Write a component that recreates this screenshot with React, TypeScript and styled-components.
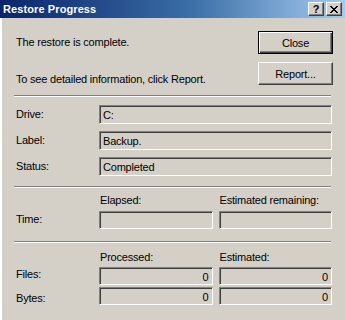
import React from "react";
import styled, { createGlobalStyle } from "styled-components";

const Global = createGlobalStyle`
  html, body { margin: 0; padding: 0; background: #d4d0c8; }
  body { font-family: "Liberation Sans", Arial, sans-serif; font-size: 11px; color: #000; }
`;

const Window = styled.div`
  width: 345px;
  height: 320px;
  overflow: hidden;
  background: #d4d0c8;
  box-shadow: inset 2px 0 0 #fff, inset 1px 0 0 #d4d0c8;
  display: flex;
  flex-direction: column;
`;

const TitleBar = styled.div`
  height: 18px;
  display: flex;
  align-items: center;
  padding: 0 3px 0 3px;
  background: linear-gradient(to right, #0a246a 0%, #3a6ea5 55%, #a6caf0 100%);
`;

const TitleText = styled.div`
  flex: 1;
  color: #fff;
  font-weight: bold;
  font-size: 11px;
  letter-spacing: 0.1px;
`;

const TitleButtons = styled.div`
  display: flex;
  gap: 2px;
`;

const CaptionButton = styled.div`
  width: 16px;
  height: 14px;
  box-sizing: border-box;
  background: #d4d0c8;
  border: 1px solid;
  border-color: #fff #404040 #404040 #fff;
  box-shadow: inset -1px -1px 0 #808080;
  display: flex;
  align-items: center;
  justify-content: center;
  font-weight: bold;
  font-size: 11px;
  line-height: 11px;
`;

const Text = styled.div`
  font-size: 11px;
  line-height: 13px;
  letter-spacing: -0.2px;
  white-space: nowrap;
`;

const Top = styled.div`
  display: grid;
  grid-template-columns: 1fr 75px;
  grid-template-rows: 23px 23px;
  row-gap: 8px;
  padding: 13px 12px 0 16px;
`;

const TopText = styled(Text)<{ $end?: boolean }>`
  align-self: ${(p) => (p.$end ? "end" : "center")};
  padding-bottom: ${(p) => (p.$end ? "0" : "1px")};
  margin-bottom: ${(p) => (p.$end ? "-1px" : "0")};
`;

const Button = styled.div<{ $default?: boolean }>`
  box-sizing: border-box;
  height: 23px;
  display: flex;
  align-items: center;
  justify-content: center;
  background: #d4d0c8;
  font-size: 11px;
  letter-spacing: -0.2px;
  ${(p) =>
    p.$default
      ? `border: 1px solid #000;
         box-shadow: inset 1px 1px 0 #fff, inset -1px -1px 0 #404040, inset -2px -2px 0 #808080;`
      : `border: 1px solid; border-color: #fff #404040 #404040 #fff;
         box-shadow: inset -1px -1px 0 #808080;`}
`;

const Separator = styled.div<{ $top: number }>`
  height: 0;
  border-top: 1px solid #808080;
  border-bottom: 1px solid #fff;
  margin: ${(p) => p.$top}px 14px 0 14px;
`;

const FieldGrid = styled.div<{ $top: number; $cols: string; $gap: number }>`
  display: grid;
  grid-template-columns: ${(p) => p.$cols};
  column-gap: 6px;
  row-gap: ${(p) => p.$gap}px;
  align-items: center;
  padding: ${(p) => p.$top}px 13px 0 16px;
`;

const Label = styled(Text)<{ $shift?: number }>`
  position: relative;
  top: ${(p) => p.$shift ?? 0}px;
`;

const Header = styled(Text)`
  padding-left: 1px;
`;

const Field = styled.div<{ $h?: number; $right?: boolean }>`
  box-sizing: border-box;
  height: ${(p) => p.$h ?? 19}px;
  background: #d4d0c8;
  border: 1px solid;
  border-color: #808080 #fff #fff #808080;
  box-shadow: inset 1px 1px 0 #404040, inset -1px -1px 0 #d4d0c8;
  display: flex;
  align-items: center;
  justify-content: ${(p) => (p.$right ? "flex-end" : "flex-start")};
  padding: 1px 3px 0 3px;
  font-size: 11px;
  letter-spacing: -0.2px;
  white-space: nowrap;
`;

const Empty = styled.div``;

const CloseGlyph = () => (
  <svg width="8" height="7" viewBox="0 0 8 7" shapeRendering="crispEdges">
    <path
      d="M0 0h2v1h-2zM6 0h2v1h-2zM1 1h2v1h-2zM5 1h2v1h-2zM2 2h4v1h-4zM3 3h2v1h-2zM2 4h4v1h-4zM1 5h2v1h-2zM5 5h2v1h-2zM0 6h2v1h-2zM6 6h2v1h-2z"
      fill="#000"
    />
  </svg>
);

export default function App() {
  return (
    <>
      <Global />
      <Window>
        <TitleBar>
          <TitleText>Restore Progress</TitleText>
          <TitleButtons>
            <CaptionButton>?</CaptionButton>
            <CaptionButton>
              <CloseGlyph />
            </CaptionButton>
          </TitleButtons>
        </TitleBar>

        <Top>
          <TopText>The restore is complete.</TopText>
          <Button $default>Close</Button>
          <TopText $end>To see detailed information, click Report.</TopText>
          <Button>Report...</Button>
        </Top>

        <Separator $top={10} />

        <FieldGrid $top={8} $cols="77px 1fr" $gap={7}>
          <Label>Drive:</Label>
          <Field>C:</Field>
          <Label>Label:</Label>
          <Field>Backup.</Field>
          <Label>Status:</Label>
          <Field>Completed</Field>
        </FieldGrid>

        <Separator $top={10} />

        <FieldGrid $top={6} $cols="77px 1fr 1fr" $gap={4}>
          <Empty />
          <Header>Elapsed:</Header>
          <Header>Estimated remaining:</Header>
          <Label $shift={-1}>Time:</Label>
          <Field $h={18} />
          <Field $h={18} />
        </FieldGrid>

        <Separator $top={12} />

        <FieldGrid $top={8} $cols="77px 1fr 1fr" $gap={3}>
          <Empty />
          <Header>Processed:</Header>
          <Header>Estimated:</Header>
          <Label $shift={-2}>Files:</Label>
          <Field $h={18} $right>0</Field>
          <Field $h={18} $right>0</Field>
        </FieldGrid>
        <FieldGrid $top={2} $cols="77px 1fr 1fr" $gap={0}>
          <Label $shift={2}>Bytes:</Label>
          <Field $h={18} $right>0</Field>
          <Field $h={18} $right>0</Field>
        </FieldGrid>
      </Window>
    </>
  );
}
